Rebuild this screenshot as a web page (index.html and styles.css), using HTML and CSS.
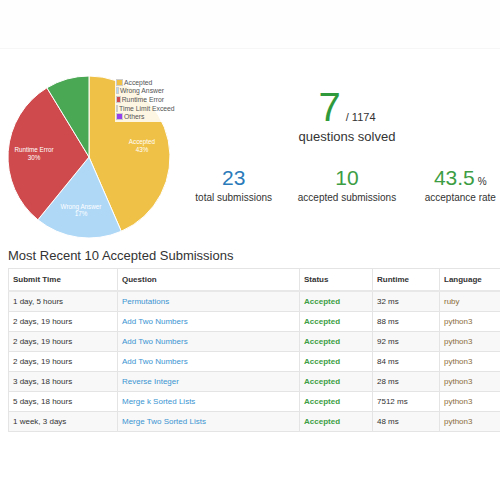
FILE: index.html
```html
<!DOCTYPE html>
<html>
<head>
<meta charset="utf-8">
<link rel="stylesheet" href="styles.css">
</head>
<body>
<div class="topbar"></div>
<div class="page">
  <div class="overview">
    <div class="chart">
      <svg class="pie" width="177" height="170" viewBox="0 0 177 170">
        <g stroke="#fff" stroke-width="1" stroke-linejoin="round">
          <path fill="#efc146" d="M89 87 L89 6 A81 81 0 0 1 121.27 161.29 Z"/>
          <path fill="#afd8f7" d="M89 87 L121.27 161.29 A81 81 0 0 1 37.86 149.82 Z"/>
          <path fill="#cf4a4c" d="M89 87 L37.86 149.82 A81 81 0 0 1 46.91 17.79 Z"/>
          <path fill="#4aa753" d="M89 87 L46.91 17.79 A81 81 0 0 1 89 6 Z"/>
        </g>
        <g class="slice-label" fill="#fff" text-anchor="middle">
          <text x="142" y="74">Accepted</text>
          <text x="142" y="82">43%</text>
          <text x="34" y="82">Runtime Error</text>
          <text x="34" y="90">30%</text>
          <text x="81" y="139">Wrong Answer</text>
          <text x="81" y="146">17%</text>
        </g>
      </svg>
      <ul class="legend">
        <li><span class="swatch sw-ac"></span>Accepted</li>
        <li><span class="swatch sw-wa"></span>Wrong Answer</li>
        <li><span class="swatch sw-re"></span>Runtime Error</li>
        <li><span class="swatch sw-tle"></span>Time Limit Exceed</li>
        <li><span class="swatch sw-other"></span>Others</li>
      </ul>
    </div>
    <div class="stats">
      <div class="solved-line"><span class="solved-num">7</span><span class="solved-total">/ 1174</span></div>
      <div class="solved-label">questions solved</div>
      <div class="stat-row">
        <div class="stat"><div class="stat-num blue">23</div><div class="stat-label">total submissions</div></div>
        <div class="stat"><div class="stat-num green">10</div><div class="stat-label">accepted submissions</div></div>
        <div class="stat"><div class="stat-num green">43.5<span class="pct">%</span></div><div class="stat-label">acceptance rate</div></div>
      </div>
    </div>
  </div>
  <h3 class="title">Most Recent 10 Accepted Submissions</h3>
  <table class="subs">
    <colgroup><col class="c1"><col class="c2"><col class="c3"><col class="c4"><col class="c5"></colgroup>
    <thead>
      <tr><th>Submit Time</th><th>Question</th><th>Status</th><th>Runtime</th><th>Language</th></tr>
    </thead>
    <tbody>
      <tr><td>1 day, 5 hours</td><td><a>Permutations</a></td><td class="ok">Accepted</td><td>32 ms</td><td class="lang">ruby</td></tr>
      <tr><td>2 days, 19 hours</td><td><a>Add Two Numbers</a></td><td class="ok">Accepted</td><td>88 ms</td><td class="lang">python3</td></tr>
      <tr><td>2 days, 19 hours</td><td><a>Add Two Numbers</a></td><td class="ok">Accepted</td><td>92 ms</td><td class="lang">python3</td></tr>
      <tr><td>2 days, 19 hours</td><td><a>Add Two Numbers</a></td><td class="ok">Accepted</td><td>84 ms</td><td class="lang">python3</td></tr>
      <tr><td>3 days, 18 hours</td><td><a>Reverse Integer</a></td><td class="ok">Accepted</td><td>28 ms</td><td class="lang">python3</td></tr>
      <tr><td>5 days, 18 hours</td><td><a>Merge k Sorted Lists</a></td><td class="ok">Accepted</td><td>7512 ms</td><td class="lang">python3</td></tr>
      <tr><td>1 week, 3 days</td><td><a>Merge Two Sorted Lists</a></td><td class="ok">Accepted</td><td>48 ms</td><td class="lang">python3</td></tr>
    </tbody>
  </table>
</div>
</body>
</html>
```
FILE: styles.css
```css
html, body {
  margin: 0;
  padding: 0;
  background: #fff;
  overflow: hidden;
  font-family: "Liberation Sans", Arial, sans-serif;
  color: #333;
}
.topbar {
  height: 48px;
  border-bottom: 1px solid #f6f6f6;
  background: #fefefe;
}
.page {
  width: 520px;
}
.overview {
  display: flex;
  height: 191px;
}
.chart {
  position: relative;
  width: 177px;
  padding-top: 21px;
}
.pie {
  display: block;
}
.slice-label {
  font-size: 6.3px;
  font-family: "Liberation Sans", Arial, sans-serif;
}
.legend {
  position: absolute;
  left: 115px;
  top: 28px;
  width: 48px;
  margin: 0;
  padding: 1px 0 1px 1px;
  list-style: none;
  background: rgba(255, 255, 255, 0.85);
  font-size: 6.8px;
  color: #545454;
}
.legend li {
  display: flex;
  align-items: center;
  height: 8.6px;
  white-space: nowrap;
}
.swatch {
  width: 5px;
  height: 5px;
  margin-right: 1px;
  border: 0.5px solid #ccc;
}
.sw-ac { background: #efc146; }
.sw-wa { background: #afd8f7; }
.sw-re { background: #cf4a4c; }
.sw-tle { background: #4aa753; }
.sw-other { background: #9440ed; }
.stats {
  width: 340px;
  padding-top: 37px;
  text-align: center;
}
.solved-line {
  display: flex;
  justify-content: center;
  align-items: baseline;
  height: 42px;
  line-height: 42px;
}
.solved-num {
  font-size: 40px;
  color: #2f9a3c;
}
.solved-total {
  font-size: 11px;
  margin-left: 5px;
  color: #333;
}
.solved-label {
  font-size: 13px;
  line-height: 16px;
  margin-top: 1px;
}
.stat-row {
  display: flex;
  margin-top: 21px;
}
.stat {
  flex: 1;
}
.stat-num {
  font-size: 21px;
  line-height: 24px;
  height: 24px;
}
.pct {
  font-size: 10px;
  line-height: 10px;
  margin-left: 3px;
  color: #333;
}
.blue { color: #2b7bba; }
.green { color: #3c9d44; }
.stat-label {
  font-size: 10px;
  line-height: 12px;
  margin-top: 2px;
}
.title {
  margin: 8px 0 4px 8px;
  font-size: 13px;
  line-height: 16px;
  font-weight: normal;
  color: #333;
}
.subs {
  margin-left: 8px;
  border-collapse: collapse;
  table-layout: fixed;
  width: 512px;
  font-size: 8px;
  color: #333;
}
.c1 { width: 109px; }
.c2 { width: 182px; }
.c3 { width: 73px; }
.c4 { width: 67px; }
.c5 { width: 81px; }
.subs th, .subs td {
  border: 1px solid #e4e4e4;
  padding: 0 4px;
  text-align: left;
  white-space: nowrap;
}
.subs th {
  height: 21px;
  font-weight: bold;
  border-bottom: 2px solid #e8e8e8;
}
.subs td {
  height: 19px;
}
.subs tbody tr:nth-child(odd) td {
  background: #f8f8f8;
}
.subs a {
  color: #3b94d2;
}
.ok {
  color: #3c9d44;
  font-weight: bold;
}
.lang {
  color: #8a6d3b;
}
```
